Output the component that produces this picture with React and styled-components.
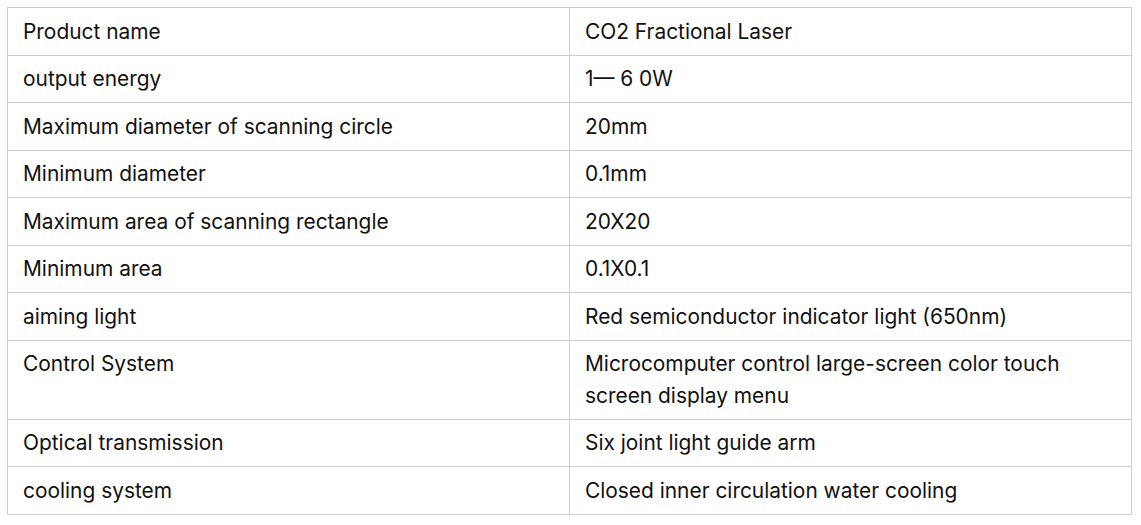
import React from "react"
import styled, { createGlobalStyle } from "styled-components"

const GlobalStyle = createGlobalStyle`
  body {
    margin: 0;
    background: #fff;
    font-family: Inter, "Noto Sans", sans-serif;
  }
`

const specs = [
  ["Product name", "CO2 Fractional Laser"],
  ["output energy", "1— 6 0W"],
  ["Maximum diameter of scanning circle", "20mm"],
  ["Minimum diameter", "0.1mm"],
  ["Maximum area of scanning rectangle", "20X20"],
  ["Minimum area", "0.1X0.1"],
  ["aiming light", "Red semiconductor indicator light (650nm)"],
  ["Control System", "Microcomputer control large-screen color touch screen display menu"],
  ["Optical transmission", "Six joint light guide arm"],
  ["cooling system", "Closed inner circulation water cooling"],
]

const App = () => {
  return (
    <Page>
      <GlobalStyle />
      <SpecTable>
        <tbody>
          {specs.map(([name, value], index) => (
            <Row key={index}>
              <Cell>{name}</Cell>
              <Cell>{value}</Cell>
            </Row>
          ))}
        </tbody>
      </SpecTable>
    </Page>
  )
}

export default App

const Page = styled.div`
  padding: 7px;
`

const SpecTable = styled.table`
  width: 1125px;
  border-collapse: collapse;
  table-layout: fixed;
`

const Row = styled.tr``

const Cell = styled.td`
  width: 50%;
  border: 1px solid #cfcfcf;
  padding: 7.5px 15px;
  font-size: 20.9px;
  line-height: 31.5px;
  color: #111;
  vertical-align: top;
  text-align: left;
`
